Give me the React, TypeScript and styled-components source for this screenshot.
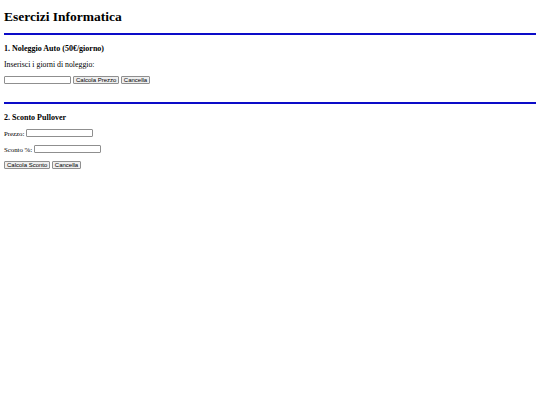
import React from 'react';
import styled, { createGlobalStyle } from 'styled-components';

const GlobalStyle = createGlobalStyle`
  html, body {
    margin: 0;
    padding: 0;
    background: #fff;
  }
  body {
    font-family: 'Liberation Serif', 'Times New Roman', serif;
    font-size: 7.8px;
    color: #000;
  }
`;

export default function App() {
  return (
    <Page>
      <GlobalStyle />
      <Title>Esercizi Informatica</Title>

      <Section>
        <SectionTitle>1. Noleggio Auto (50€/giorno)</SectionTitle>
        <Line>Inserisci i giorni di noleggio:</Line>
        <Row>
          <Input type="text" />
          <Button>Calcola Prezzo</Button>
          <Button>Cancella</Button>
        </Row>
      </Section>

      <Section>
        <SectionTitle>2. Sconto Pullover</SectionTitle>
        <Row>
          <Label>Prezzo:</Label>
          <Input type="text" />
        </Row>
        <Row>
          <Label>Sconto %:</Label>
          <Input type="text" />
        </Row>
        <Row>
          <Button>Calcola Sconto</Button>
          <Button>Cancella</Button>
        </Row>
      </Section>
    </Page>
  );
}

const Page = styled.div`
  padding: 1px 4px 4px;
`;

const Title = styled.h1`
  font-size: 13.5px;
  font-weight: bold;
  margin: 7.5px 0 8.5px;
`;

const Section = styled.section`
  border-top: 2px solid #0c0cc8;
  padding-bottom: 10px;
`;

const SectionTitle = styled.h3`
  font-size: 8px;
  font-weight: bold;
  margin: 9px 0 6px;
`;

const Line = styled.p`
  margin: 6.5px 0;
  line-height: 9px;
  height: 9px;
`;

const Row = styled.div`
  margin: 7px 0;
  height: 9px;
  display: flex;
  align-items: center;
  gap: 1.5px;
`;

const Label = styled.label`
  font-size: 6.8px;
`;

const Input = styled.input`
  box-sizing: border-box;
  width: 67px;
  height: 8px;
  padding: 0 1px;
  border: 1px solid #8f8f8f;
  border-radius: 1px;
  font-size: 6px;
  margin: 0 0.5px 0 0;
`;

const Button = styled.button`
  box-sizing: border-box;
  font-family: 'Liberation Sans', Arial, sans-serif;
  font-size: 6px;
  height: 8px;
  padding: 0 2px;
  line-height: 6px;
  background: #efefef;
  border: 1px solid #8f8f8f;
  border-radius: 1px;
  color: #000;
  margin: 0;
`;
